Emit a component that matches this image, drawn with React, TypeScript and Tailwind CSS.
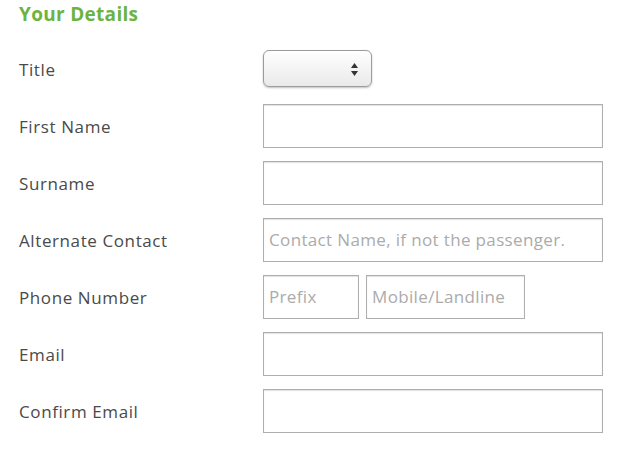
const inputClass =
  'h-[44px] border border-[#aeaeae] bg-white px-[5px] text-[17px] tracking-[0.35px] text-[#444] shadow-[inset_0_1px_1px_rgba(0,0,0,0.12)] outline-none placeholder:text-[#ababab]';

const Row = ({ label, children }: { label: string; children: React.ReactNode }) => (
  <div className="flex h-[57px] items-center">
    <label className="w-[244px] shrink-0 pt-[2px] text-[17px] tracking-[0.6px] text-[#4a4a4a]">{label}</label>
    {children}
  </div>
);

export default function App() {
  return (
    <div className="h-[454px] w-[640px] bg-white pl-[19px] font-['Open_Sans',sans-serif]">
      <h2 className="pt-[1px] text-[19px] font-bold leading-[26px] tracking-[0.3px] text-[#6cb33f]">Your Details</h2>
      <div className="mt-[13px]">
        <Row label="Title">
          <div className="relative h-[37px] w-[109px] rounded-[6px] border border-[#9c9c9c] bg-gradient-to-b from-white to-[#e9e9e9] shadow-[0_1px_2px_rgba(0,0,0,0.25)]">
            <svg className="absolute right-[12px] top-[11px]" width="9" height="15" viewBox="0 0 9 15">
              <path d="M4.5 1 L8 6 L1 6 Z" fill="#333" />
              <path d="M4.5 14 L8 9 L1 9 Z" fill="#333" />
            </svg>
          </div>
        </Row>
        <Row label="First Name">
          <input className={`${inputClass} w-[340px]`} />
        </Row>
        <Row label="Surname">
          <input className={`${inputClass} w-[340px]`} />
        </Row>
        <Row label="Alternate Contact">
          <input className={`${inputClass} w-[340px]`} placeholder="Contact Name, if not the passenger." />
        </Row>
        <Row label="Phone Number">
          <div className="flex gap-[7px]">
            <input className={`${inputClass} w-[96px]`} placeholder="Prefix" />
            <input className={`${inputClass} w-[159px]`} placeholder="Mobile/Landline" />
          </div>
        </Row>
        <Row label="Email">
          <input className={`${inputClass} w-[340px]`} />
        </Row>
        <Row label="Confirm Email">
          <input className={`${inputClass} w-[340px]`} />
        </Row>
      </div>
    </div>
  );
}
